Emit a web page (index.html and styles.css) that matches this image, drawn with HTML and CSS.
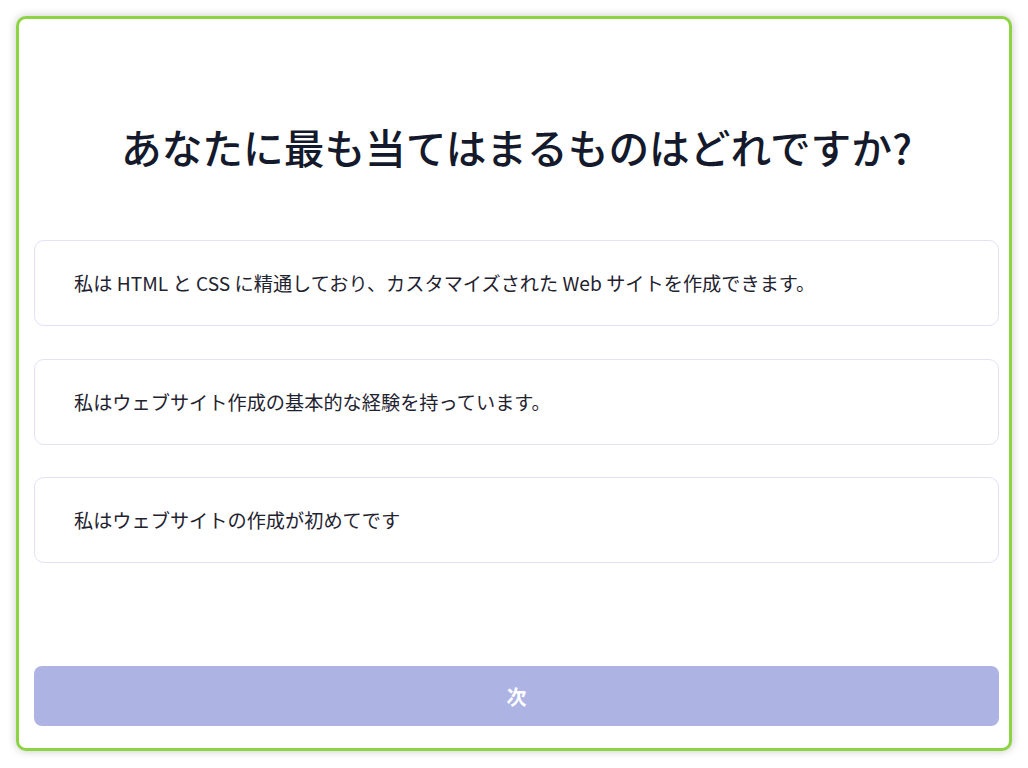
FILE: index.html
```html
<!DOCTYPE html>
<html lang="ja">
<head>
<meta charset="utf-8">
<title>Quiz</title>
<link rel="stylesheet" href="styles.css">
</head>
<body>
<div class="frame">
  <h1 class="title">あなたに最も当てはまるものはどれですか?</h1>
  <div class="options">
    <div class="option">私は HTML と CSS に精通しており、カスタマイズされた Web サイトを作成できます。</div>
    <div class="option">私はウェブサイト作成の基本的な経験を持っています。</div>
    <div class="option">私はウェブサイトの作成が初めてです</div>
  </div>
  <button class="next">次</button>
</div>
</body>
</html>
```

FILE: styles.css
```css
html, body {
  margin: 0;
  padding: 0;
  background: #ffffff;
}
body {
  font-family: "Noto Sans CJK JP", "Noto Sans", sans-serif;
  padding: 16px;
  width: 1028px;
  height: 768px;
  box-sizing: border-box;
}
.frame {
  box-sizing: border-box;
  width: 996px;
  height: 735px;
  border: 3px solid #8cd444;
  border-radius: 10px;
  box-shadow: 0 0 10px rgba(0, 0, 0, 0.22);
  background: #fff;
  padding: 104px 10px 22px 15px;
  display: flex;
  flex-direction: column;
}
.title {
  margin: 0;
  font-size: 40.7px;
  line-height: 48px;
  font-weight: 500;
  color: #141a2b;
  text-align: center;
}
.options {
  margin-top: 69px;
  display: flex;
  flex-direction: column;
  gap: 32.5px;
}
.option {
  box-sizing: border-box;
  height: 86px;
  border: 1px solid #e3e1f6;
  border-radius: 10px;
  padding: 0 39px;
  display: flex;
  align-items: center;
  font-size: 19.2px;
  color: #1f2330;
}
.next {
  margin-top: auto;
  height: 60px;
  border: none;
  border-radius: 8px;
  background: #adb3e3;
  color: #ffffff;
  font-family: "Noto Sans CJK JP", "Noto Sans", sans-serif;
  font-size: 20px;
  font-weight: 700;
}
```
